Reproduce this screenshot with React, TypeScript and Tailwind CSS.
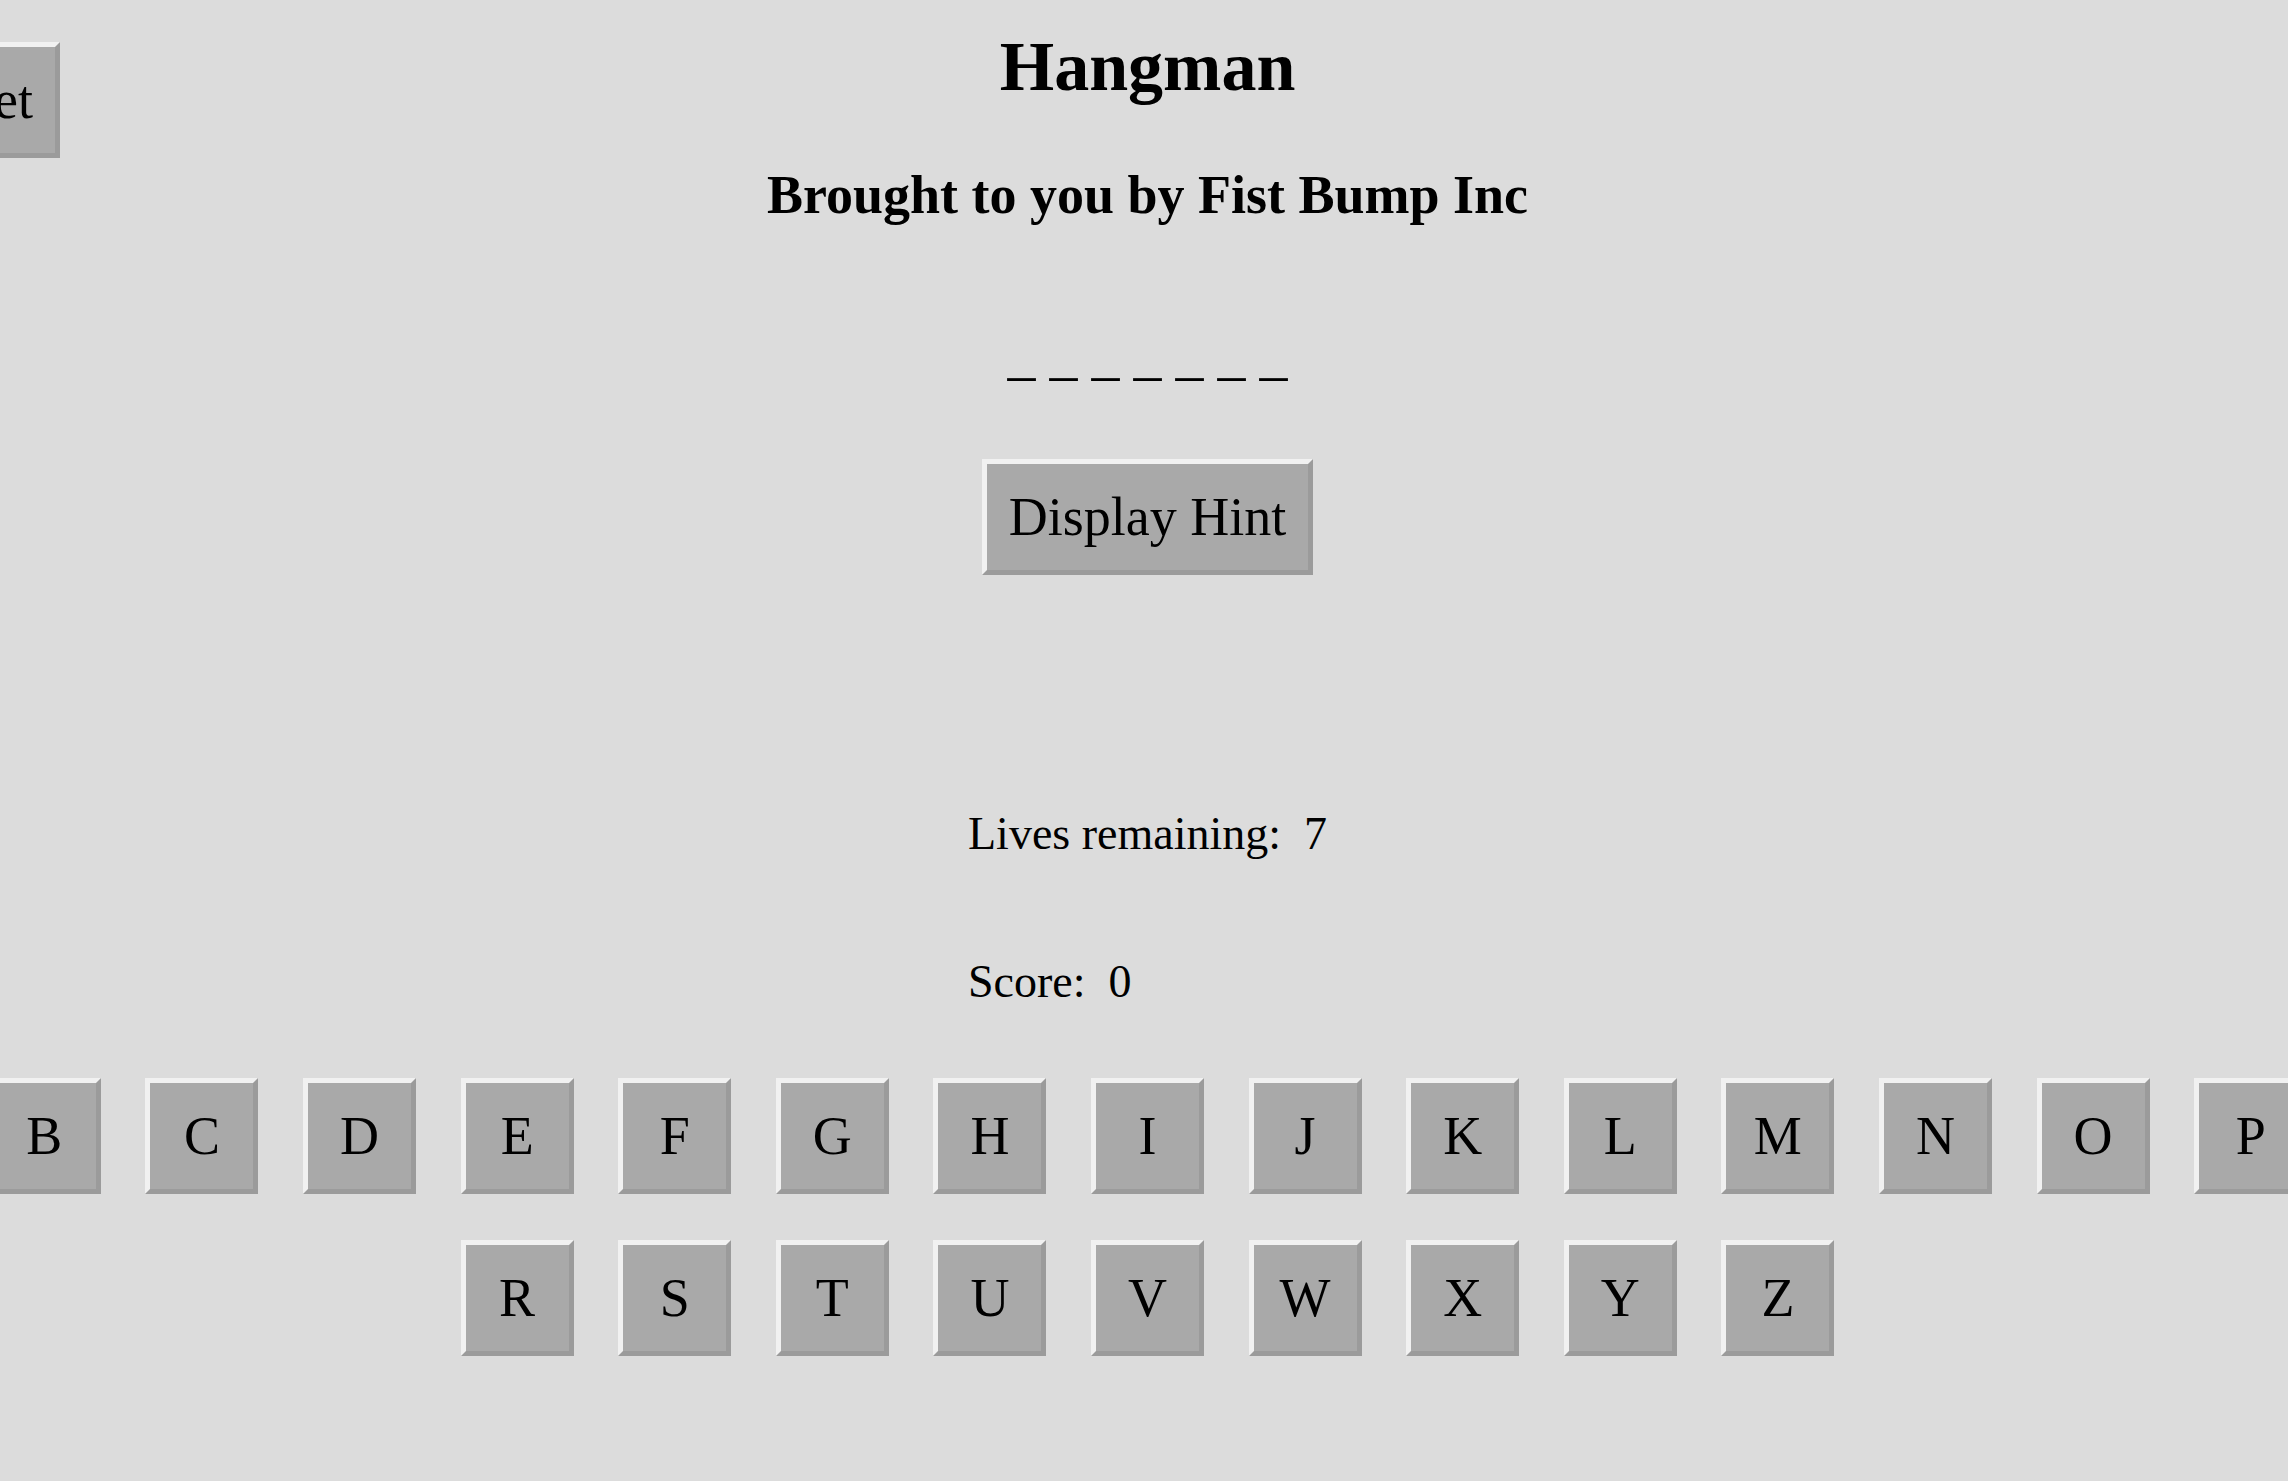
const ROW_ONE = "ABCDEFGHIJKLMNOPQ".split("");
const ROW_TWO = "RSTUVWXYZ".split("");

/**
 * Grey bevelled key, used for the alphabet
 */
function LetterKey({ letter }: { letter: string }) {
  return (
    <button
      type="button"
      className="flex h-[116px] w-[113px] shrink-0 items-center justify-center border-[5px] border-t-[#f1f1f1] border-r-[#9b9b9b] border-b-[#9b9b9b] border-l-[#f1f1f1] bg-[#a9a9a9] text-[54px] leading-none text-black"
    >
      {letter}
    </button>
  );
}

export default function App() {
  return (
    <div className="min-h-screen overflow-hidden bg-[#dcdcdc] pl-[7px] font-['Liberation_Serif','Times_New_Roman',serif] text-black">
      {/* Header */}
      <header className="grid grid-cols-[1fr_auto_1fr] items-start">
        <div>
          <button
            type="button"
            className="mt-[42px] -ml-[121px] flex h-[116px] items-center border-[5px] border-t-[#f1f1f1] border-r-[#9b9b9b] border-b-[#9b9b9b] border-l-[#f1f1f1] bg-[#a9a9a9] px-[22px] text-[54px] leading-none"
          >
            Reset
          </button>
        </div>
        <h1 className="pt-[27px] text-center text-[70px] leading-[80px] font-bold">Hangman</h1>
        <div />
      </header>

      <h2 className="mt-[5px] text-center text-[54px] leading-[64px] font-bold">Brought to you by Fist Bump Inc</h2>

      {/* Word */}
      <div className="mt-[96px] text-center text-[56px] leading-[64px]">_ _ _ _ _ _ _</div>

      <div className="mt-[72px] flex justify-center">
        <button
          type="button"
          className="flex h-[116px] items-center border-[5px] border-t-[#f1f1f1] border-r-[#9b9b9b] border-b-[#9b9b9b] border-l-[#f1f1f1] bg-[#a9a9a9] px-[22px] text-[54px] leading-none"
        >
          Display Hint
        </button>
      </div>

      {/* Stats */}
      <div className="mt-[231px] flex justify-center">
        <div className="flex flex-col gap-[92px] text-[46px] leading-[56px]">
          <p>{"Lives remaining:\u00a0 7"}</p>
          <p>{"Score:\u00a0 0"}</p>
        </div>
      </div>

      {/* Alphabet */}
      <div className="mt-[68px] flex flex-col gap-[46px] pb-[120px]">
        <div className="flex justify-center gap-x-[44.6px]">
          {ROW_ONE.map((l) => (
            <LetterKey key={l} letter={l} />
          ))}
        </div>
        <div className="flex justify-center gap-x-[44.6px]">
          {ROW_TWO.map((l) => (
            <LetterKey key={l} letter={l} />
          ))}
        </div>
      </div>
    </div>
  );
}
